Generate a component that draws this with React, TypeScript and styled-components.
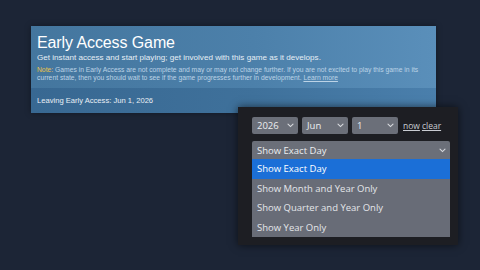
import React from "react"
import styled, { createGlobalStyle } from "styled-components"

const GlobalStyle = createGlobalStyle`
  html, body {
    margin: 0;
    padding: 0;
    background: #1c2536;
    width: 480px;
    height: 270px;
    overflow: hidden;
  }
  body {
    font-family: "Liberation Sans", Arial, sans-serif;
  }
`

const Page = styled.div`
  position: relative;
  width: 480px;
  height: 270px;
  padding: 26px 0 0 31px;
  box-sizing: border-box;
`

const Banner = styled.div`
  width: 405px;
  background: linear-gradient(90deg, #44769e 0%, #4c80aa 55%, #5a8fba 100%);
  box-shadow: 0 0 6px rgba(0, 0, 0, 0.35);
`

const BannerTop = styled.div`
  padding: 8px 6px 6px 6px;
  height: 62px;
  box-sizing: border-box;
`

const Title = styled.div`
  color: #ffffff;
  font-size: 16px;
  line-height: 18px;
  letter-spacing: -0.1px;
`

const Subtitle = styled.div`
  color: #e6eef5;
  font-size: 8.1px;
  line-height: 10px;
  margin-top: 1px;
`

const Note = styled.div`
  color: #bcd3e6;
  font-size: 6.75px;
  line-height: 8px;
  margin-top: 3px;
  white-space: nowrap;
`

const NoteLabel = styled.span`
  color: #e8c34a;
`

const LearnMore = styled.span`
  text-decoration: underline;
`

const BannerBottom = styled.div`
  background: linear-gradient(90deg, #386892 0%, #3f719b 55%, #4a7fac 100%);
  height: 25px;
  display: flex;
  align-items: center;
  padding: 0 6px;
`

const Leaving = styled.div`
  color: #e9eff5;
  font-size: 7.6px;
`

const Popup = styled.div`
  position: absolute;
  left: 238px;
  top: 107px;
  width: 220px;
  height: 138px;
  background: #1d1e23;
  box-shadow: 0 0 8px rgba(0, 0, 0, 0.6);
  padding: 10px 8px 0 14px;
  box-sizing: border-box;
  font-family: "Open Sans", "Noto Sans", sans-serif;
`

const DateRow = styled.div`
  display: flex;
  align-items: center;
  gap: 4px;
`

const Select = styled.div<{ $w: number }>`
  width: ${p => p.$w}px;
  height: 17px;
  background: #6b6f79;
  border-radius: 2px;
  color: #eceef0;
  font-size: 9.5px;
  display: flex;
  align-items: center;
  justify-content: space-between;
  padding: 0 4px 0 5px;
  box-sizing: border-box;
`

const LinkText = styled.span`
  color: #c9ccd2;
  font-size: 8.5px;
  text-decoration: underline;
`

const Links = styled.div`
  display: flex;
  gap: 2px;
  margin-left: 1px;
`

const Combo = styled.div`
  margin-top: 7px;
  width: 198px;
`

const ComboHead = styled.div`
  height: 18px;
  background: #6b6f79;
  border-radius: 2px 2px 0 0;
  color: #eceef0;
  font-size: 9.5px;
  display: flex;
  align-items: center;
  justify-content: space-between;
  padding: 0 4px 0 5px;
`

const Option = styled.div<{ $active?: boolean }>`
  height: 19.5px;
  background: ${p => (p.$active ? "#1b6fd7" : "#686c77")};
  color: ${p => (p.$active ? "#ffffff" : "#e4e6ea")};
  font-size: 9.5px;
  display: flex;
  align-items: center;
  padding: 0 5px;
`

const Chevron = () => (
  <svg width="7" height="5" viewBox="0 0 7 5">
    <path d="M1 1.2 L3.5 3.6 L6 1.2" fill="none" stroke="#d8dade" strokeWidth="1.1" strokeLinecap="round" />
  </svg>
)

const options = [
  "Show Exact Day",
  "Show Month and Year Only",
  "Show Quarter and Year Only",
  "Show Year Only",
]

const App = () => (
  <>
    <GlobalStyle />
    <Page>
      <Banner>
        <BannerTop>
          <Title>Early Access Game</Title>
          <Subtitle>Get instant access and start playing; get involved with this game as it develops.</Subtitle>
          <Note>
            <NoteLabel>Note:</NoteLabel> Games in Early Access are not complete and may or may not change further. If you are not excited to play this game in its
            <br />
            current state, then you should wait to see if the game progresses further in development. <LearnMore>Learn more</LearnMore>
          </Note>
        </BannerTop>
        <BannerBottom>
          <Leaving>Leaving Early Access: Jun 1, 2026</Leaving>
        </BannerBottom>
      </Banner>
      <Popup>
        <DateRow>
          <Select $w={46}>2026 <Chevron /></Select>
          <Select $w={46}>Jun <Chevron /></Select>
          <Select $w={46}>1 <Chevron /></Select>
          <Links>
            <LinkText>now</LinkText>
            <LinkText>clear</LinkText>
          </Links>
        </DateRow>
        <Combo>
          <ComboHead>Show Exact Day <Chevron /></ComboHead>
          {options.map((o, i) => (
            <Option key={o} $active={i === 0}>{o}</Option>
          ))}
        </Combo>
      </Popup>
    </Page>
  </>
)

export default App
